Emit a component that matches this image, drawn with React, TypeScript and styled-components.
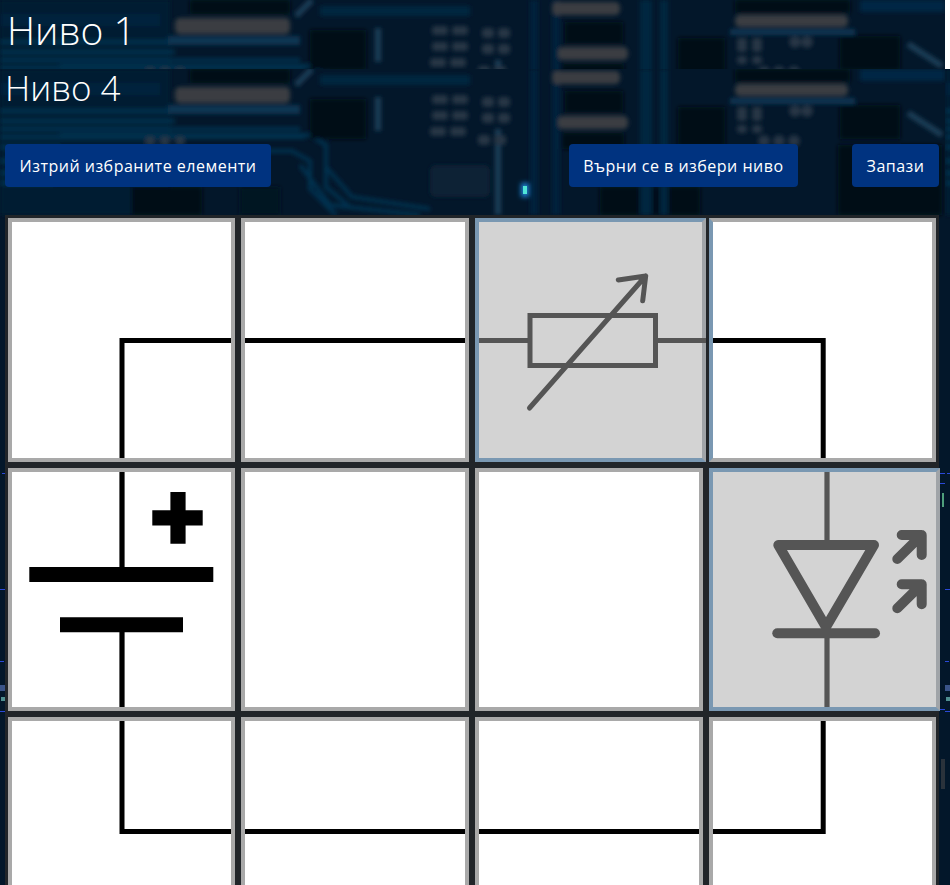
import React from "react";
import styled, { createGlobalStyle, css } from "styled-components";

// circuit board picture behind the page, tiled every 945px like the original image
const boardArt = `
<svg xmlns="http://www.w3.org/2000/svg" width="945" height="816" viewBox="0 0 945 816">
  <defs>
    <filter id="b" x="-5%" y="-5%" width="110%" height="110%"><feGaussianBlur stdDeviation="2.2"/></filter>
    <filter id="g" x="-200%" y="-200%" width="500%" height="500%"><feGaussianBlur stdDeviation="2.4"/></filter>
  </defs>
  <rect width="945" height="816" fill="#03172a"/>
  <g filter="url(#b)">
    <rect x="0" y="0" width="170" height="146" fill="#031d33"/>
    <g fill="none" stroke="#06304f" stroke-width="4">
      <path d="M0 42H170M0 52H175M0 60H300M0 68H305M0 78H60M0 92H70M0 104H60M0 114H56"/>
      <path d="M60 66H310L326 76V118L350 138"/>
      <path d="M78 82H292L310 92V120L336 146"/>
      <path d="M300 96L330 136L420 146M326 98L352 128L430 140"/>
    </g>
    <g fill="#010a14">
      <rect x="190" y="0" width="100" height="14" />
      <rect x="310" y="30" width="56" height="40" />
      <rect x="132" y="118" width="70" height="28" />
      <rect x="565" y="22" width="58" height="22" />
      <rect x="562" y="64" width="62" height="16" />
      <rect x="735" y="0" width="115" height="13" />
      <rect x="678" y="38" width="47" height="40" />
      <rect x="840" y="36" width="60" height="34" />
      <rect x="838" y="76" width="104" height="70" />
      <rect x="600" y="118" width="100" height="28" />
      <rect x="240" y="118" width="40" height="28" fill="#021323"/>
    </g>
    <g fill="#0a3452">
      <rect x="168" y="36" width="132" height="9" />
      <rect x="552" y="0" width="8" height="146" fill="#04243d"/>
      <rect x="530" y="0" width="8" height="146" fill="#04243d"/>
      <rect x="640" y="0" width="12" height="146" fill="#042741"/>
      <rect x="660" y="0" width="8" height="146" fill="#042741"/>
      <rect x="730" y="29" width="125" height="6" />
      <rect x="860" y="0" width="85" height="12" fill="#052844"/>
      <rect x="320" y="6" width="150" height="10" fill="#052640"/>
      <rect x="0" y="14" width="160" height="12" fill="#04233c"/>
    </g>
    <g fill="none" stroke="#1a3d56" stroke-width="6">
      <path d="M312 0L296 16M378 28V62M908 44L942 66M498 60V146"/>
    </g>
    <g fill="#3a3e43">
      <rect x="175" y="18" width="115" height="16" rx="5" />
      <rect x="552" y="2" width="68" height="13" rx="5" />
      <rect x="558" y="47" width="70" height="13" rx="5" />
      <rect x="735" y="15" width="113" height="12" rx="5" />
    </g>
    <g fill="#263645">
      <rect x="432" y="26" width="16" height="9" rx="3"/><rect x="452" y="26" width="16" height="9" rx="3"/>
      <rect x="432" y="42" width="16" height="9" rx="3"/><rect x="452" y="42" width="16" height="9" rx="3"/>
      <rect x="430" y="58" width="16" height="9" rx="3"/><rect x="450" y="58" width="16" height="9" rx="3"/>
      <rect x="482" y="28" width="12" height="10" rx="3"/><rect x="498" y="28" width="12" height="10" rx="3"/>
      <rect x="482" y="44" width="12" height="10" rx="3"/><rect x="498" y="44" width="12" height="10" rx="3"/>
      <rect x="478" y="66" width="12" height="10" rx="3"/><rect x="494" y="66" width="12" height="10" rx="3"/>
      <rect x="737" y="38" width="10" height="14" rx="3"/><rect x="752" y="38" width="10" height="14" rx="3"/>
      <rect x="737" y="56" width="10" height="8" rx="3"/><rect x="752" y="56" width="10" height="8" rx="3"/>
      <circle cx="795" cy="42" r="6"/><circle cx="807" cy="42" r="6"/>
      <circle cx="764" cy="72" r="6"/><circle cx="779" cy="72" r="6"/><circle cx="794" cy="72" r="6"/>
      <circle cx="150" cy="72" r="5"/><circle cx="165" cy="72" r="5"/><circle cx="180" cy="72" r="5"/>
      <rect x="430" y="96" width="60" height="32" rx="6" fill="#0b2436"/>
    </g>
  </g>
  <rect x="521" y="114" width="8" height="14" fill="#1a7fd0" filter="url(#g)"/>
  <rect x="523" y="117" width="4" height="8" fill="#4fe6d8"/>
  <g fill="#2a49d8">
    <rect x="0" y="520" width="5" height="1"/><rect x="0" y="592" width="4" height="1"/>
    <rect x="940" y="404" width="5" height="1"/><rect x="940" y="414" width="5" height="1"/>
    <rect x="2" y="404" width="3" height="1"/><rect x="940" y="640" width="5" height="1"/>
    <rect x="0" y="642" width="5" height="1"/>
  </g>
  <g>
    <rect x="942" y="424" width="2" height="14" fill="#4f9f7c"/>
    <rect x="0" y="616" width="5" height="6" fill="#3a5488"/>
    <rect x="1" y="628" width="4" height="4" fill="#4f8f90"/>
    <rect x="941" y="690" width="4" height="30" fill="#2a323b"/>
  </g>
</svg>`;

const boardArtUrl = `url("data:image/svg+xml,${encodeURIComponent(boardArt)}")`;

const circuitBackground = css`
  background-image: ${boardArtUrl};
  background-size: 945px 816px;
  background-repeat: repeat;
`;

const GlobalStyle = createGlobalStyle`
  html, body {
    margin: 0;
    padding: 0;
    height: 885px;
    overflow: hidden;
    background: #fff;
    font-family: "Open Sans", "Noto Sans", sans-serif;
  }
`;

const Page = styled.div`
  width: 950px;
  height: 885px;
  overflow: hidden;
`;

const TopBar = styled.header`
  ${circuitBackground}
  width: 945px;
  height: 69px;
  padding: 4px 0 0 7px;
  box-sizing: border-box;
`;

const Title = styled.h1`
  margin: 0;
  font-size: 39px;
  line-height: 52px;
  font-weight: 300;
  color: #fff;
`;

const Level = styled.section`
  ${circuitBackground}
  display: flow-root;
  height: 816px;
`;

const LevelTitle = styled.h2`
  margin: -5px 0 0;
  padding: 0 0 32px 5px;
  font-size: 35px;
  line-height: 48px;
  font-weight: 300;
  color: #fff;
`;

const Toolbar = styled.div`
  display: flex;
  padding: 0 11px 0 5px;
  height: 71px;
  gap: 54px;
`;

const ActionButton = styled.button<{ $pushed?: boolean }>`
  height: 43px;
  padding: 1px 14.5px 0;
  margin-left: ${(p) => (p.$pushed ? "auto" : "0")};
  border: 0;
  border-radius: 4px;
  background: #003380;
  color: #fff;
  font-family: inherit;
  font-size: 16px;
  letter-spacing: 0.5px;
  white-space: nowrap;
`;

const Board = styled.div`
  width: 934px;
  box-sizing: border-box;
  margin-left: 5px;
  padding: 3px 3px 0;
  display: grid;
  grid-template-columns: 227px 228px 228px 227px;
  grid-template-rows: 244px 243px 244px;
  gap: 6px;
  background: #212529;
`;

const Tile = styled.div<{ $selected?: boolean; $overhang?: number; $blueLeft?: boolean }>`
  position: relative;
  box-sizing: border-box;
  min-width: 0;
  border: 4px solid #a9a9a9;
  background: #fff;
  ${(p) =>
    p.$blueLeft &&
    css`
      border-left-color: #7a98b2;
    `}
  ${(p) =>
    p.$selected &&
    css`
      border-color: #7a98b2;
      border-right-color: #a0a4a8;
      background: #d3d3d3;
      margin-right: -${p.$overhang ?? 0}px;
    `}
`;

const Symbol = styled.svg`
  display: block;
  width: 100%;
  height: 100%;
  overflow: visible;
`;

const Wire = ({ d }: { d: string }) => (
  <Symbol>
    <path d={d} fill="none" stroke="#000" strokeWidth="5" />
  </Symbol>
);

const Rheostat = () => (
  <Symbol>
    <g fill="none" stroke="#555" strokeWidth="5">
      <path d="M0 118.5H49M179 118.5H227" />
      <rect x="51" y="93.5" width="125.5" height="50" />
      <path d="M50.5 186L166.7 54M139.3 58L166.7 54L163.7 78.7" strokeLinecap="round" strokeLinejoin="round" />
    </g>
  </Symbol>
);

const Battery = () => (
  <Symbol>
    <path d="M110 0V96M110 160V235" fill="none" stroke="#000" strokeWidth="5.2" />
    <path d="M17.3 102.5H201.3M48 152.8H171" fill="none" stroke="#000" strokeWidth="15" />
    <path d="M140.3 45.8H190.7M166 20V71.7" fill="none" stroke="#000" strokeWidth="15.2" />
  </Symbol>
);

const Led = () => (
  <Symbol>
    <path d="M114 0V75M114 160V235" fill="none" stroke="#555" strokeWidth="5.2" />
    <g fill="none" stroke="#555" strokeWidth="10" strokeLinecap="round" strokeLinejoin="round">
      <path d="M65.3 73H161L113 155Z" />
      <path d="M64.3 161.3H162" />
      <path d="M184.3 87L208.7 63M188.7 63H208.7V83" />
      <path d="M184.3 136.3L208.7 112.3M188.7 112.3H208.7V132.3" />
    </g>
  </Symbol>
);

export default function App() {
  return (
    <Page>
      <GlobalStyle />
      <TopBar>
        <Title>Ниво 1</Title>
      </TopBar>
      <Level>
        <LevelTitle>Ниво 4</LevelTitle>
        <Toolbar>
          <ActionButton>Изтрий избраните елементи</ActionButton>
          <ActionButton $pushed>Върни се в избери ниво</ActionButton>
          <ActionButton>Запази</ActionButton>
        </Toolbar>
        <Board>
          <Tile>
            <Wire d="M110 236V118.5H219" />
          </Tile>
          <Tile>
            <Wire d="M0 118.5H220" />
          </Tile>
          <Tile $selected $overhang={3}>
            <Rheostat />
          </Tile>
          <Tile $blueLeft>
            <Wire d="M0 118.5H110.2V236" />
          </Tile>

          <Tile>
            <Battery />
          </Tile>
          <Tile />
          <Tile />
          <Tile $selected $overhang={4}>
            <Led />
          </Tile>

          <Tile>
            <Wire d="M110 0V110.5H219" />
          </Tile>
          <Tile>
            <Wire d="M0 110.5H220" />
          </Tile>
          <Tile>
            <Wire d="M0 110.5H220" />
          </Tile>
          <Tile>
            <Wire d="M0 110.5H110.2V0" />
          </Tile>
        </Board>
      </Level>
    </Page>
  );
}
